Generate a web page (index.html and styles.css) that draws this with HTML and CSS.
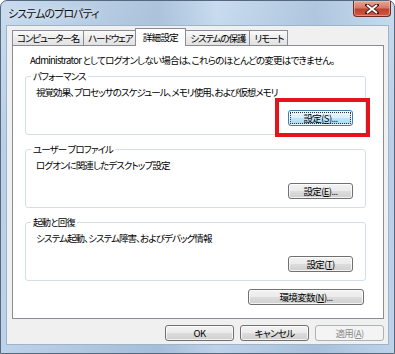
FILE: index.html
```html
<!DOCTYPE html>
<html lang="ja">
<head>
  <meta charset="UTF-8">
  <title>システムのプロパティ</title>
  <link rel="stylesheet" href="styles.css">
</head>
<body>
  <div class="window">
    <div class="titlebar">
      <span class="title">システムのプロパティ</span>
      <button class="close" aria-label="閉じる">
        <svg width="14" height="10" viewBox="0 0 14 10">
          <path d="M2 1 L12 9 M12 1 L2 9" stroke="#3b1a14" stroke-width="3.6" stroke-linecap="square"/>
          <path d="M2 1 L12 9 M12 1 L2 9" stroke="#fff" stroke-width="2"/>
        </svg>
      </button>
    </div>

    <div class="client">
      <div class="tabs">
        <div class="tab">コンピューター名</div>
        <div class="tab">ハードウェア</div>
        <div class="tab is-active">詳細設定</div>
        <div class="tab">システムの保護</div>
        <div class="tab">リモート</div>
      </div>

      <div class="panel">
        <p class="note">Administrator としてログオンしない場合は、これらのほとんどの変更はできません。</p>

        <fieldset class="group">
          <legend>パフォーマンス</legend>
          <p class="tight">視覚効果、プロセッサのスケジュール、メモリ使用、および仮想メモリ</p>
          <div class="group-actions">
            <span class="highlight">
              <button class="btn is-focused">設定(<u>S</u>)...</button>
            </span>
          </div>
        </fieldset>

        <fieldset class="group">
          <legend>ユーザー プロファイル</legend>
          <p>ログオンに関連したデスクトップ設定</p>
          <div class="group-actions">
            <button class="btn">設定(<u>E</u>)...</button>
          </div>
        </fieldset>

        <fieldset class="group">
          <legend>起動と回復</legend>
          <p>システム起動、システム障害、およびデバッグ情報</p>
          <div class="group-actions">
            <button class="btn">設定(<u>T</u>)</button>
          </div>
        </fieldset>

        <div class="env-row">
          <button class="btn btn-wide">環境変数(<u>N</u>)...</button>
        </div>
      </div>

      <div class="dialog-buttons">
        <button class="btn">OK</button>
        <button class="btn">キャンセル</button>
        <button class="btn" disabled>適用(<u>A</u>)</button>
      </div>
    </div>
  </div>
</body>
</html>
```

FILE: styles.css
```css
html, body {
  margin: 0;
  padding: 0;
  background: #fff;
}

body {
  font-family: "Noto Sans CJK JP", "Noto Sans", sans-serif;
  font-size: 9.5px;
  font-feature-settings: "palt";
  letter-spacing: -0.9px;
  color: #000;
}

.window {
  width: 395px;
  height: 354px;
  box-sizing: border-box;
  border: 1px solid #56687e;
  border-radius: 7px 7px 0 0;
  background:
    linear-gradient(90deg, rgba(120, 150, 185, 0) 0%, rgba(120, 150, 185, .35) 40%, rgba(120, 150, 185, 0) 55%, rgba(120, 150, 185, .3) 80%, rgba(120, 150, 185, 0) 100%),
    linear-gradient(180deg, #c9dcef 0%, #b9d0e8 40%, #bcd3ea 100%);
  display: flex;
  flex-direction: column;
}

.titlebar {
  height: 24px;
  display: flex;
  justify-content: space-between;
  align-items: flex-start;
  flex-shrink: 0;
}

.title {
  margin: 5px 0 0 7px;
  font-size: 11px;
  letter-spacing: -0.9px;
  line-height: 14px;
  color: #111;
  text-shadow: 0 0 6px rgba(255, 255, 255, .9);
}

.close {
  width: 38px;
  height: 16px;
  margin-right: 3px;
  padding: 0;
  border: 1px solid #6d2b23;
  border-top: none;
  border-radius: 0 0 4px 4px;
  background: linear-gradient(180deg, #e6a696 0%, #d67a68 45%, #c2412e 55%, #cc5a3f 100%);
  box-shadow: inset 0 0 0 1px rgba(255, 210, 200, .45);
  display: flex;
  align-items: center;
  justify-content: center;
}

.client {
  flex: 1;
  margin: 0 5px 8px 5px;
  border: 1px solid #9fb3c9;
  background: #f0f0f0;
  display: flex;
  flex-direction: column;
  padding: 3px 4px 0 5px;
}

.tabs {
  display: flex;
  align-items: flex-end;
  height: 16px;
  position: relative;
  z-index: 1;
}

.tab {
  height: 15px;
  box-sizing: border-box;
  padding: 0 4px;
  line-height: 14px;
  letter-spacing: -1.1px;
  border: 1px solid #898c95;
  border-bottom: none;
  margin-right: -1px;
  background: linear-gradient(180deg, #fafafa 0%, #ececec 50%, #e2e2e2 100%);
  white-space: nowrap;
}

.tab.is-active {
  height: 18px;
  margin: 0 -1px -1px -2px;
  padding: 0 7px;
  line-height: 16px;
  letter-spacing: -0.6px;
  background: #fff;
  position: relative;
  z-index: 2;
}

.panel {
  height: 274px;
  box-sizing: border-box;
  border: 1px solid #898c95;
  background: #fff;
  padding: 8px 17px 0 12px;
}

.note {
  margin: 0 0 3px 5px;
  line-height: 13px;
  letter-spacing: -0.75px;
  white-space: nowrap;
}

.group {
  margin: 0 0 8px 0;
  padding: 0 12px 8px 5px;
  border: 1px solid #d5dfe5;
  border-radius: 3px;
}

.group legend {
  padding: 0 2px;
  line-height: 13px;
}

.group p {
  margin: 3px 0 0 5px;
  line-height: 13px;
}

.group p.tight {
  letter-spacing: -0.95px;
}

.group-actions {
  display: flex;
  justify-content: flex-end;
  margin-top: 11px;
}

.highlight {
  position: relative;
  display: inline-block;
}

.highlight::after {
  content: '';
  position: absolute;
  left: -13px;
  right: -17px;
  top: -12px;
  bottom: -11px;
  border: 4px solid #e4131c;
  pointer-events: none;
}

.btn {
  display: block;
  width: 65px;
  height: 16px;
  padding: 0;
  border: 1px solid #707070;
  border-radius: 3px;
  background: linear-gradient(180deg, #f2f2f2 0%, #ebebeb 50%, #dddddd 50%, #cfcfcf 100%);
  box-shadow: inset 0 0 0 1px rgba(255, 255, 255, .75);
  font-family: inherit;
  font-size: 9.5px;
  font-feature-settings: "palt";
  letter-spacing: -0.6px;
  line-height: 13px;
  color: #000;
}

.btn u {
  text-underline-offset: 1px;
}

.btn.is-focused {
  border-color: #3c7fb1;
  background: linear-gradient(180deg, #eaf6fd 0%, #d9f0fc 50%, #bee6fd 50%, #a7d9f5 100%);
  outline: 1px dotted #333;
  outline-offset: -3px;
}

.btn:disabled {
  border-color: #adb2b5;
  background: #f4f4f4;
  box-shadow: none;
  color: #8d8d8d;
}

.env-row {
  display: flex;
  justify-content: flex-end;
  margin: 8px 2px 0 0;
}

.btn-wide {
  width: 116px;
}

.dialog-buttons {
  display: flex;
  justify-content: flex-end;
  gap: 6px;
  margin-top: 6px;
}

.dialog-buttons .btn {
  width: 69px;
}
```
